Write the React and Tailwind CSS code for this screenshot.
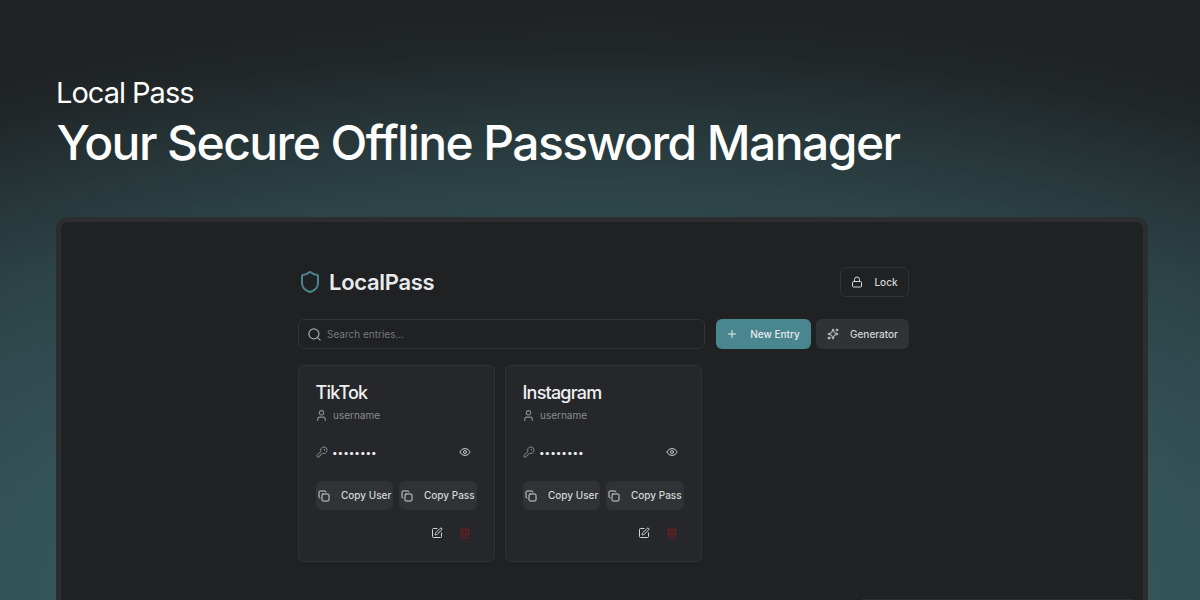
import { Shield, Lock, Search, Plus, Sparkles, User, KeyRound, Eye, Copy, SquarePen, Trash2 } from 'lucide-react';

const ENTRIES = ['TikTok', 'Instagram'];

function EntryCard({ name }) {
  return (
    <div className="w-[197px] h-[197px] bg-[#25272a] border border-[#303235] rounded-md pl-[17px] pr-[17px] pt-[17px]">
      <h3 className="-ml-[0.5px] text-[18px] leading-[20px] font-medium tracking-[-0.8px] text-[#eef0f1]">{name}</h3>
      <div className="flex items-center gap-[5px] -ml-[1px] mt-[4px] h-[16px] text-[#8a8d90]">
        <User size={13} />
        <span className="text-[10px]">username</span>
      </div>
      <div className="flex items-center justify-between mt-[21px] h-[16px] pr-[6px]">
        <div className="flex items-center gap-[4px]">
          <KeyRound size={12} className="text-[#8a8d90]" />
          <span className="text-[10px] tracking-[-0.05px] text-[#eef0f1]">••••••••</span>
        </div>
        <Eye size={12} className="text-[#c9cbcd]" />
      </div>
      <div className="flex gap-[6px] mt-[21px] whitespace-nowrap">
        <button className="w-[77px] h-[29px] flex items-center bg-[#2f3336] rounded-md pl-[2px] text-[10px] font-medium text-[#d4d6d8]">
          <Copy size={12} className="mr-[11px] shrink-0" />
          Copy User
        </button>
        <button className="w-[78px] h-[29px] flex items-center bg-[#2f3336] rounded-md pl-[2px] text-[10px] font-medium text-[#d4d6d8]">
          <Copy size={12} className="mr-[11px] shrink-0" />
          Copy Pass
        </button>
      </div>
      <div className="flex justify-end gap-[16px] mt-[17px] pr-[6px]">
        <SquarePen size={12} className="text-[#d4d6d8]" />
        <Trash2 size={12} className="text-[#7f1d1d]" />
      </div>
    </div>
  );
}

export default function App() {
  return (
    <div
      className="relative w-[1200px] h-[600px] overflow-hidden flex flex-col pt-[76px] px-[56px] bg-[radial-gradient(1320px_600px_at_50%_100%,#375d62_0%,#345358_45%,#2c4448_67.5%,#273639_80%,#212729_92%,#1f2123_100%)] text-white"
      style={{ fontFamily: 'Inter, sans-serif' }}
    >
      <h2 className="text-[29px] leading-[34px] font-normal tracking-[-1px]">Local Pass</h2>
      <h1 className="ml-[0.5px] mt-[4px] text-[48px] leading-[58px] font-medium tracking-[-1.57px]">Your Secure Offline Password Manager</h1>
      <div className="mt-[45px] w-[1092px] h-[400px] shrink-0 bg-[#1f2123] border-[5px] border-[#2c2d2e] rounded-xl pl-[237px] pt-[45px]">
        <div className="w-[611px]">
          <div className="flex items-center justify-between h-[30px]">
            <div className="flex items-center gap-[7px]">
              <Shield size={24} className="text-[#4a8690]" />
              <span className="text-[22px] font-semibold tracking-[-0.3px] text-[#e8eaec]">LocalPass</span>
            </div>
            <button className="w-[69px] h-[30px] flex items-center justify-center gap-[11px] rounded-md border border-[#303235] text-[10px] font-medium text-[#d4d6d8]">
              <Lock size={12} />
              Lock
            </button>
          </div>
          <div className="flex mt-[22px] h-[30px]">
            <div className="w-[407px] flex items-center gap-[5px] border border-[#303235] rounded-md pl-[8px]">
              <Search size={15} className="text-[#a4a6a8]" />
              <span className="text-[10px] text-[#77797c]">Search entries...</span>
            </div>
            <button className="ml-[11px] w-[95px] flex items-center justify-center gap-[12px] bg-[#4a8690] rounded-md text-[10px] font-medium text-[#e8eaec] pr-[1px]">
              <Plus size={12} />
              New Entry
            </button>
            <button className="ml-[5px] w-[93px] flex items-center justify-center gap-[11px] bg-[#2f3336] rounded-md text-[10px] font-medium text-[#d4d6d8]">
              <Sparkles size={12} />
              Generator
            </button>
          </div>
          <div className="flex gap-[10px] mt-[16px]">
            {ENTRIES.map(name => <EntryCard key={name} name={name} />)}
          </div>
        </div>
      </div>
      <div className="absolute left-[862px] bottom-0 w-[271px] h-px bg-[#2c2e30]" />
    </div>
  );
}
